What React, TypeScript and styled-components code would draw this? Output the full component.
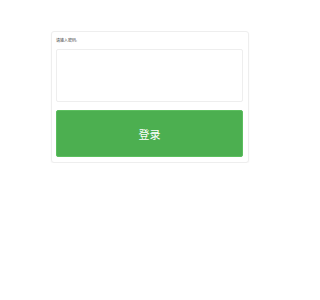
import styled, { createGlobalStyle } from 'styled-components';

const GlobalStyle = createGlobalStyle`
    html, body {
        margin: 0;
        padding: 0;
        background: #fff;
        font-family: "Noto Sans", "Noto Sans CJK SC", sans-serif;
    }
`;

function App() {
    return (
        <>
            <GlobalStyle />
            <Page>
                <Card>
                    <Label>请输入密码:</Label>
                    <Input />
                    <LoginButton>登录</LoginButton>
                </Card>
            </Page>
        </>
    );
}

const Page = styled.div`
    padding: 31px 0 0 51px;
    display: flex;
`;

const Card = styled.div`
    width: 187px;
    padding: 5px 5px 5px 4px;
    border: 1px solid #eee;
    border-radius: 3px;
    box-shadow: 0 1px 2px rgba(0, 0, 0, 0.04);
    display: flex;
    flex-direction: column;
    align-items: stretch;
    background: #fff;
    box-sizing: content-box;
`;

const Label = styled.div`
    font-size: 4px;
    line-height: 5px;
    color: #444;
    margin: 1px 0 6px;
`;

const Input = styled.div`
    height: 51px;
    border: 1px solid #eee;
    border-radius: 2px;
    background: #fff;
`;

const LoginButton = styled.button`
    margin-top: 8px;
    height: 47px;
    border: 1px solid #5cbf5f;
    border-radius: 2px;
    background: #4caf50;
    color: #fff;
    font-size: 11px;
    font-family: "Noto Sans CJK SC", sans-serif;
    padding: 0;
`;

export default App;
